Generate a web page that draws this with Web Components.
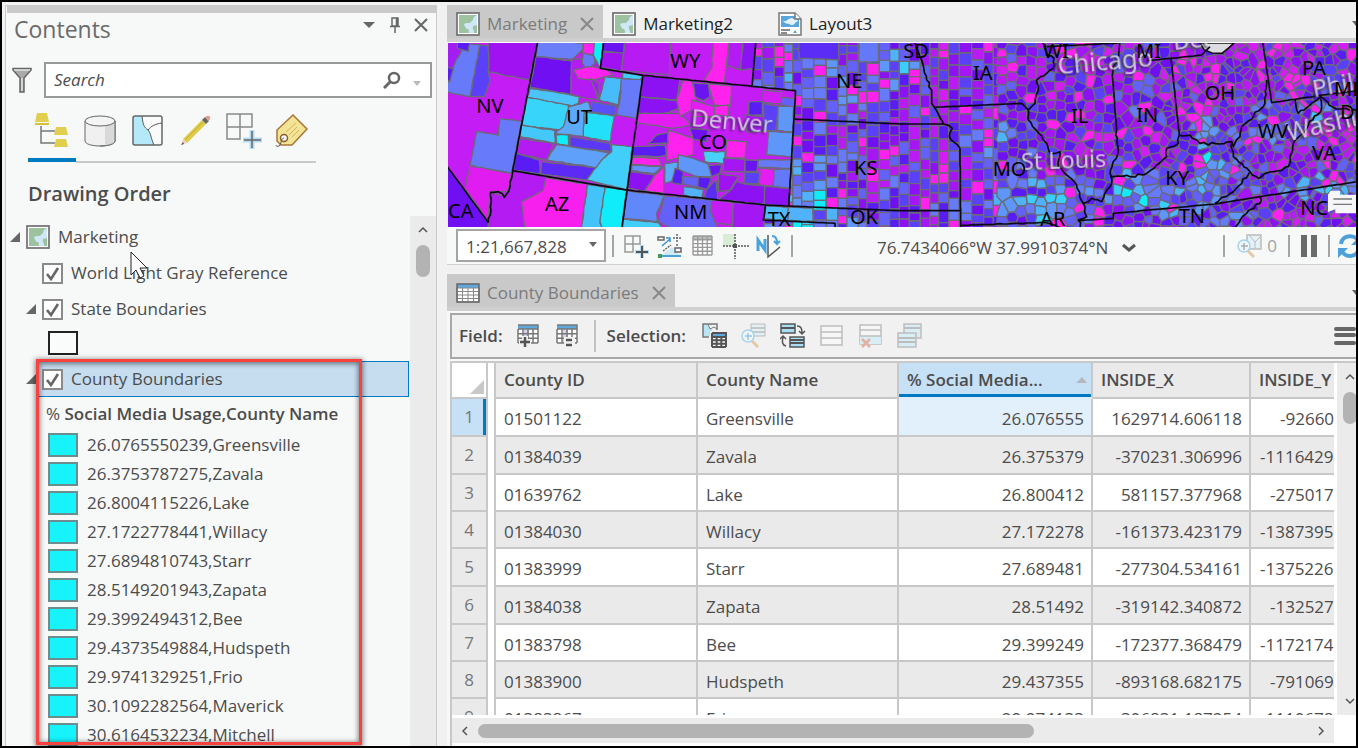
<!DOCTYPE html>
<html lang="en">
<head>
<meta charset="utf-8">
<title>Marketing - Contents</title>
<style>
html, body { margin: 0; height: 100%; }
body { font-family: "Open Sans", "Noto Sans", sans-serif; font-size: 17px; line-height: 24px; color: #4c4c4c; background: #f1f1f1; overflow: hidden; }
</style>
</head>
<body>
<gis-app></gis-app>
<script>
const BASE = `:host,*{box-sizing:border-box} button,select,input{font:inherit;color:inherit;margin:0;padding:0;border:0;background:none;border-radius:0} button{display:flex;align-items:center;justify-content:center}`;
const define = (name, css, html, setup) => customElements.define(name, class extends HTMLElement {
  constructor() {
    super();
    this.attachShadow({ mode: 'open' }).innerHTML = `<style>${BASE}${css}</style>${typeof html === 'function' ? html(this) : html}`;
    if (setup) setup(this, this.shadowRoot);
  }
});

/* ---------- icons ---------- */
const gridLines = (x, y, w, h, c, r) => { let d = ''; for (let i = 0; i <= c; i++) d += `M${x + w * i / c} ${y}v${h}`; for (let j = 0; j <= r; j++) d += `M${x} ${y + h * j / r}h${w}`; return d; };
const ICONS = {
  caret: [14, 8, '<path d="M1 1h12l-6 6z" fill="#666"/>'],
  caretS: [8, 5, '<path d="M0 0h8l-4 5z" fill="#666"/>'],
  caretLight: [8, 5, '<path d="M0 0h8l-4 5z" fill="#bbb"/>'],
  pin: [12, 16, '<path d="M3 1h6v8H3zM1 9.500h10M6 10v6M7.500 1v8" fill="none" stroke="#666" stroke-width="1.500"/>'],
  close: [14, 14, '<path d="M1 1l12 12M13 1L1 13" stroke="#666" stroke-width="2" fill="none"/>'],
  closeTab: [14, 14, '<path d="M1 1l12 12M13 1L1 13" stroke="#888" stroke-width="2" fill="none"/>'],
  filter: [20, 26, '<path d="M1 1.500h18v1.500l-7 8v14H8V11L1 3z" fill="#aaa" stroke="#666" stroke-width="1.500"/><path d="M2 3h16" stroke="#fff"/><path d="M10 11v13" stroke="#fff"/>'],
  search: [18, 18, '<circle cx="11" cy="7" r="5" fill="none" stroke="#666" stroke-width="2.500"/><path d="M7 11l-6 6" stroke="#666" stroke-width="3"/>'],
  order: [34, 34, '<path d="M6 13v17h14M6 18h14" fill="none" stroke="#777" stroke-width="1.500"/><path d="M2 0h10l2 9H0z M21 14h10l2 8H19z M21 26h10l2 8H19z" fill="#e2cf4f"/><path d="M0 10h14v2H0z" fill="#d8c338"/>'],
  source: [32, 32, '<path d="M1 6v20c0 3 7 5 15 5s15-2 15-5V6" fill="#f0f0f0" stroke="#666"/><path d="M21 10v21c6-1 10-2 10-5V7z" fill="#d9d9d9"/><ellipse cx="16" cy="6" rx="15" ry="5" fill="#f4f4f4" stroke="#666"/><path d="M31 6v20c0 3-7 5-15 5" fill="none" stroke="#666"/>'],
  select: [32, 32, '<rect x="1" y="1" width="29" height="29" rx="2" fill="#fafafa"/><path d="M1 1h9c1 9 2 11 6 14 3 3 3 9 6 15H1z" fill="#b5e8f8"/><path d="M10 1c1 9 2 11 6 14 3 3 3 9 6 15M16 15c3-4 7-6 14-7" fill="none" stroke="#555"/><rect x="1" y="1" width="29" height="29" rx="2" fill="none" stroke="#666" stroke-width="1.500"/>'],
  edit: [32, 32, '<path d="M3 24l19-19 4 4L7 28z" fill="#dfca4a"/><path d="M5 25l18-18" stroke="#c7b02f"/><path d="M3 24l4 4-6 2z" fill="#f1cfc0"/><path d="M1 30l2-3 1 2z" fill="#555"/><path d="M22 5l3-3 4 4-3 3z" fill="#666"/><path d="M25 2l2-1c2-1 4 1 3 3l-2 2z" fill="#e89a8c"/>'],
  snap: [36, 36, '<path d="M1 1h25v13H1zM1 1h13v25H1z" fill="none" stroke="#888" stroke-width="1.500"/><path d="M26 17v19M17 27h19" stroke="#b5dcf5" stroke-width="5"/><path d="M26 18v17M18 27h17" stroke="#666" stroke-width="1.500"/>'],
  label: [34, 34, '<path d="M18 1l14 14-15 16H6l-4-4V16z" fill="#f3e394" stroke="#a8773a" stroke-width="1.500"/><path d="M11 18l10-9M14 21l8-8M17 23l7-7" stroke="#d2b06a"/><circle cx="9" cy="24" r="3.500" fill="#fff" stroke="#8a5a28" stroke-width="1.500"/><path d="M9 24c-4 1-2 6-5 8-2 1-3 0-3-1" fill="none" stroke="#555"/>'],
  map: [24, 24, '<rect x="1" y="1" width="22" height="22" fill="#fff" stroke="#777" stroke-width="1.800"/><rect x="3" y="3" width="18" height="18" fill="#9dc29f"/><path d="M21 3c-3 1-4 3-4 5-2 1-2 3-4 3s-4 0-5 1c0 2 2 3 2 5 2-1 3 0 3 4h5c1-2 1-3 3-4z" fill="#cfe7f7"/><path d="M17 14l4-1v8h-3c1-2-2-4-1-7z" fill="#9dc29f"/>'],
  layout: [24, 24, '<path d="M1 1h16l6 6v16H1z" fill="#fff" stroke="#777" stroke-width="1.500"/><rect x="3" y="4" width="18" height="11" fill="#5aa5da"/><path d="M5 9c4 1 5-3 9-3 2 2 5 0 6 3-3 1-4 5-7 4-2-2-5 0-8-4z" fill="#e3f2fb"/><path d="M17 1v6h6" fill="#fff" stroke="#777" stroke-width="1.500"/><path d="M3 18h9M3 21h6" stroke="#666" stroke-width="1.500"/><path d="M15 21l2-3 2 3z" fill="#5aa5da"/>'],
  table: [24, 20, `<rect x="1" y="1" width="22" height="18" fill="#fff"/><path d="M1 1h22v4H1z" fill="#5fa9dd"/><path d="${gridLines(1, 5, 22, 14, 4, 4)}" stroke="#888" fill="none"/><rect x="1" y="1" width="22" height="18" fill="none" stroke="#666" stroke-width="1.500"/>`],
  navGrid: [26, 26, '<path d="M1 3h15v8H1zM1 3h8v16H1z" fill="none" stroke="#999" stroke-width="1.500"/><path d="M18 12v13M11 19h14" stroke="#b5dcf5" stroke-width="4"/><path d="M18 13v12M12 19h12" stroke="#555" stroke-width="2"/>'],
  navConstraint: [26, 26, '<path d="M3 23l12-9 9 9z" fill="#cfe9f7"/><path d="M4 23h20" stroke="#4aa0d8" stroke-width="2"/><path d="M1 21h4v4H1z" fill="#3f9a55"/><path d="M5 13l8-7M9 5h4v4" stroke="#3b93d0" stroke-width="1.500" fill="none"/><path d="M1 4h6v3H1zM18 15h6v4h-6z" fill="#fff" stroke="#666" stroke-width="1.500"/><path d="M16 5h8M20 1v8M6 18l8-6M20 11v3" stroke="#666" stroke-width="1.500" stroke-dasharray="2 1"/>'],
  navTable: [22, 22, `<rect x="1" y="1" width="19" height="19" fill="#fff"/><path d="M1 1h19v4H1z" fill="#bbb"/><path d="${gridLines(1, 1, 19, 19, 4, 5)}" stroke="#999" stroke-width="1.400" fill="none"/>`],
  navCross: [26, 26, '<path d="M0 1h12v12H0z" fill="#d8ecd6"/><path d="M12 1v25M0 13h26" stroke="#555" stroke-width="1.500" stroke-dasharray="2 1"/><rect x="10" y="11" width="4" height="4" fill="#555"/>'],
  navNorth: [26, 26, '<path d="M2 18V7l7 10V6" fill="none" stroke="#4aa3dc" stroke-width="3"/><path d="M12 2v22l12-10" fill="none" stroke="#555" stroke-width="1.500"/><path d="M16 3c4 0 5 3 5 7M18 8l3 3 3-3" fill="none" stroke="#4aa3dc" stroke-width="2"/>'],
  chevron: [16, 10, '<path d="M2 2l6 5 6-5" fill="none" stroke="#555" stroke-width="3"/>'],
  zoomSel: [26, 26, '<path d="M11 2h14v14H11z" fill="#e4f1f7" stroke="#bbb" stroke-width="1.500"/><path d="M14 3l5 6 5-5M19 9v6" fill="none" stroke="#bbb"/><circle cx="8" cy="13" r="6" fill="#eef7fc" stroke="#a8d2ec" stroke-width="1.500"/><path d="M8 10v7M5 13h7" stroke="#aaa" stroke-width="1.500"/><path d="M12 18l6 6" stroke="#e5c8a8" stroke-width="3"/>'],
  pause: [16, 22, '<path d="M0 0h6v22H0zM10 0h6v22h-6z" fill="#6a6a6a"/>'],
  refresh: [24, 24, '<path d="M3 10c1-10 15-10 18-2M21 14c-1 10-14 10-17 3" fill="none" stroke="#4da0da" stroke-width="4"/><path d="M23 1v10H13zM0 24V14h10z" fill="#4da0da"/>'],
  addField: [24, 26, `<path d="M1 2h20v18H1z" fill="#fff"/><path d="M7 7h5v13H7z" fill="#d4d2ee"/><path d="M1 2h20v4H1z" fill="#5fa9dd"/><path d="${gridLines(1, 6, 20, 14, 4, 3)}M1 2h20v4" stroke="#777" stroke-width="1.500" fill="none"/><path d="M8 13v12M2 19h12" stroke="#f1f1f1" stroke-width="6"/><path d="M8 14v10M3 19h10" stroke="#555" stroke-width="2.500"/>`],
  calcField: [24, 26, `<path d="M1 2h20v18H1z" fill="#fff"/><path d="M7 7h5v13H7z" fill="#d4d2ee"/><path d="M1 2h20v4H1z" fill="#5fa9dd"/><path d="${gridLines(1, 6, 20, 14, 4, 3)}M1 2h20v4" stroke="#777" stroke-width="1.500" fill="none"/><path d="M8 14h11v10H8z" fill="#f1f1f1"/><path d="M10 17h6M10 22h6" stroke="#555" stroke-width="2.500"/>`],
  selAttr: [26, 26, `<path d="M1 1h9v12H1z" fill="#b9e6f5"/><path d="M6 1l2 5 4-2 3 2" fill="#fff" stroke="#777"/><path d="M7 14H1V1h14v6" fill="none" stroke="#777" stroke-width="1.500"/><path d="M8 8h17v17H8z" fill="#f1f1f1"/><path d="M10 10h14v14H10z" fill="#fff"/><path d="M10 10h14v4H10z" fill="#5fa9dd"/><path d="${gridLines(10, 14, 14, 10, 3, 3)}M10 10h14v4M10 10v4" stroke="#555" stroke-width="2" fill="none"/>`],
  zoomRow: [26, 26, '<path d="M10 1h14v12H10z" fill="#e2f0f5" stroke="#bbb"/><path d="M10 5h14M10 9h14" stroke="#bbb" stroke-width="1.500"/><circle cx="7" cy="13" r="6" fill="#eef7fc" stroke="#a8d2ec" stroke-width="1.500"/><path d="M7 10v7M4 13h7" stroke="#9ac3dd" stroke-width="1.500"/><path d="M11 18l6 6" stroke="#e5c8a8" stroke-width="3"/>'],
  switchSel: [26, 26, '<path d="M1 1h14v9H1zM10 14h14v10H10z" fill="#a9def2" stroke="#555" stroke-width="1.500"/><path d="M1 5h14M10 17h14M10 20h14" stroke="#555" stroke-width="2"/><path d="M17 3c5 0 5 4 5 8M19 8l3 3 3-3M6 23c-4-1-4-4-3-9M0 16l3-3 3 3" fill="none" stroke="#555" stroke-width="1.500"/>'],
  clearSel: [24, 22, '<path d="M1 1h21v19H1zM1 7h21M1 13h21" fill="#f6f6f6" stroke="#bdbdbd" stroke-width="1.500"/>'],
  deleteSel: [26, 26, '<path d="M2 2h21v19H2z" fill="#f6f6f6" stroke="#bdbdbd" stroke-width="1.500"/><path d="M2 13h21v8H2z" fill="#d8edf4"/><path d="M2 7h21M2 13h21" stroke="#bdbdbd" stroke-width="1.500"/><path d="M4 16l8 8M12 16l-8 8" stroke="#e5b0a0" stroke-width="2.500"/>'],
  copySel: [26, 26, '<path d="M7 1h17v14H7z" fill="#d8edf4" stroke="#bdbdbd" stroke-width="1.500"/><path d="M7 5h17" stroke="#bdbdbd" stroke-width="2"/><path d="M1 10h18v14H1z" fill="#d8edf4" stroke="#bdbdbd" stroke-width="1.500"/><path d="M1 15h18M1 19h18" stroke="#bdbdbd" stroke-width="2"/>'],
  menu: [22, 20, '<path d="M2 3h18M2 9h18M2 17h18" stroke="#666" stroke-width="4" stroke-linecap="round"/>'],
  expand: [12, 12, '<path d="M11 1v10H1z" fill="#666"/>'],
  up: [10, 7, '<path d="M1 6l4-4 4 4" fill="none" stroke="#555" stroke-width="1.500"/>'],
  down: [10, 7, '<path d="M1 1l4 4 4-4" fill="none" stroke="#555" stroke-width="1.500"/>'],
  left: [7, 10, '<path d="M6 1L2 5l4 4" fill="none" stroke="#555" stroke-width="1.500"/>'],
  right: [7, 10, '<path d="M1 1l4 4-4 4" fill="none" stroke="#555" stroke-width="1.500"/>'],
  corner: [16, 16, '<path d="M15 1v14H1z" fill="#c8c8c8"/>'],
  sort: [11, 6, '<path d="M0 6h11L6 0z" fill="#b5b9bd"/>'],
  cursor: [20, 30, '<path d="M1 1v23l5-5 4 8 4-2-4-8h7z" fill="#fff" stroke="#222"/>']
};
customElements.define('ui-icon', class extends HTMLElement {
  static observedAttributes = ['name'];
  constructor() { super(); this.attachShadow({ mode: 'open' }); }
  attributeChangedCallback(a, b, name) {
    const [w, h, body] = ICONS[name];
    this.shadowRoot.innerHTML = `<style>:host{display:block;flex:none;width:${w}px;height:${h}px}svg{display:block}</style><svg width="${w}" height="${h}" viewBox="0 0 ${w} ${h}" aria-hidden="true">${body}</svg>`;
  }
});

/* ---------- document tabs ---------- */
define('doc-tab', `
:host{display:block;flex:none}
button{height:33px;padding:4px 9px 0;gap:7px;white-space:nowrap;color:#222;justify-content:flex-start}
:host([active]) button{background:#c9c9c9;color:#7b7b7b}
.t{min-width:80px;text-align:left}
ui-icon[name=closeTab]{margin-left:6px}`,
  el => `<button type="button"><ui-icon name="${el.getAttribute('icon')}"></ui-icon><span class="t"><slot></slot></span>${el.hasAttribute('active') ? '<ui-icon name="closeTab"></ui-icon>' : ''}</button>`);

define('tab-strip', `
:host{display:flex;align-items:flex-end;height:37px;flex:none;border-bottom:4px solid #cfcfcf;overflow:hidden}
.more{margin-left:auto;height:30px;flex:none;width:4px;overflow:hidden;justify-content:flex-start}`,
  `<slot></slot><button class="more" type="button" aria-label="Tab list"><ui-icon name="caretS"></ui-icon></button>`);

/* ---------- contents pane ---------- */
define('layer-row', `
:host{display:flex;align-items:center;height:36px;margin-right:1px;white-space:nowrap}
.e{width:12px;margin:0 1px 0 19px;flex:none}
:host([root]) .e{margin:0 1px 0 3px}
.b{display:flex;align-items:center;gap:8px;flex:1;height:36px;padding-left:3px;border:1px solid transparent}
:host([selected]) .b{background:#c6dcef;border-color:#0079c1}
label{display:flex;align-items:center;gap:8px}
input{appearance:none;flex:none;width:21px;height:21px;border:2px solid #8a8a8a;background:#fff url('data:image/svg+xml,<svg xmlns="http://www.w3.org/2000/svg" viewBox="0 0 17 17"><path d="M3 9l4 5 7-11" fill="none" stroke="%23666" stroke-width="2.600"/></svg>') center/17px no-repeat}`,
  el => `<span class="e">${el.hasAttribute('leaf') ? '' : '<ui-icon name="expand"></ui-icon>'}</span><div class="b">${el.hasAttribute('root') ? '<ui-icon name="map"></ui-icon><slot></slot>' : '<label><input type="checkbox" checked><span><slot></slot></span></label>'}</div>`);

define('legend-item', `
:host{display:flex;align-items:center;gap:9px;height:29px;padding-left:42px;white-space:nowrap}
i{width:30px;height:24px;border:2px solid #6d8c8e;background:#16f3fb}
:host([hollow]){height:34px;padding-bottom:2px}
:host([hollow]) i{border-color:#222;background:#fafcfb}`, `<i></i><slot></slot>`);

define('scroll-bar', `
:host{display:flex;flex-direction:column;align-items:center;justify-content:space-between;background:#ebebeb;flex:none;overflow:hidden}
:host([horizontal]){flex-direction:row}
i{background:#b3b3b3;border-radius:8px;flex:none;width:14px;height:32px;margin:12px 0 auto}
:host([horizontal]) i{width:63%;height:14px;margin:0 auto 0 1px}
button{padding:10px 0 0;width:13px}
button:last-child{padding:0 0 10px}
:host([horizontal]) button{padding:0;width:25px;height:25px}`,
  el => { const h = el.hasAttribute('horizontal'); return `<button type="button" aria-label="Scroll back"><ui-icon name="${h ? 'left' : 'up'}"></ui-icon></button><i></i>${el.hasAttribute('open') ? '' : `<button type="button" aria-label="Scroll forward"><ui-icon name="${h ? 'right' : 'down'}"></ui-icon></button>`}`; });

const LEGEND = ['26.0765550239,Greensville', '26.3753787275,Zavala', '26.8004115226,Lake', '27.1722778441,Willacy', '27.6894810743,Starr', '28.5149201943,Zapata', '29.3992494312,Bee', '29.4373549884,Hudspeth', '29.9741329251,Frio', '30.1092282564,Maverick', '30.6164532234,Mitchell'];

define('contents-pane', `
:host{display:flex;flex-direction:column;margin:3px 0 0 3px;border:1px solid #cacaca;border-bottom:0;background:#f7f9f8;min-height:0;overflow:hidden}
.bar{height:7px;margin-left:1px;background:#cacaca;flex:none}
header{display:flex;align-items:flex-start;height:34px;flex:none;padding:0 8px;color:#6a6a6a}
h1{margin:0 auto 0 0;font-weight:400;font-size:23px;line-height:32px}
header button{margin-left:13px;height:24px}
.search{display:flex;align-items:center;gap:12px;flex:none;margin:15px 4px 0 6px;height:36px}
.box{display:flex;align-items:center;flex:1;height:36px;border:2px solid #999;background:#fff;padding:0 9px 0 8px}
.box input{flex:1;min-width:0;font-style:italic;outline:0}
.box input::placeholder{color:#4c4c4c;opacity:1}
.box button+button{margin:6px 0 0 12px}
nav{display:flex;height:59px;flex:none;margin:6px 0 0 22px}
nav button{width:48px;height:59px;padding-bottom:4px;border-bottom:2px solid #cacaca}
nav button.on{height:58px;padding-bottom:2px;border-bottom:4px solid #0079c1}
h2{margin:16px 0 0 22px;font-weight:600;font-size:20px;line-height:30px;flex:none}
.tree{position:relative;display:flex;flex:1;min-height:0;margin-top:7px}
.list{flex:1;min-width:0;overflow:hidden;padding-top:3px}
h3{margin:0;padding-left:40px;font-weight:600;font-size:17px;line-height:33px;white-space:nowrap}
h3 span{font-weight:400}
.mark{position:absolute;left:30px;top:143px;right:74px;bottom:1px;border:3px solid #f8423f;box-shadow:0 1px 5px 1px #0007,inset 0 1px 5px 1px #0007;pointer-events:none}
.cursor{position:absolute;left:124px;top:35px;pointer-events:none}
scroll-bar{width:26px}`,
  `<div class="bar"></div>
<header><h1>Contents</h1><button type="button" aria-label="Options"><ui-icon name="caret"></ui-icon></button><button type="button" aria-label="Auto hide"><ui-icon name="pin"></ui-icon></button><button type="button" aria-label="Close"><ui-icon name="close"></ui-icon></button></header>
<div class="search"><button type="button" aria-label="Filter"><ui-icon name="filter"></ui-icon></button>
<div class="box"><input type="text" placeholder="Search" aria-label="Search"><button type="button" aria-label="Run search"><ui-icon name="search"></ui-icon></button><button type="button" aria-label="Search options"><ui-icon name="caretLight"></ui-icon></button></div></div>
<nav>${['order', 'source', 'select', 'edit', 'snap', 'label'].map((n, i) => `<button type="button" aria-label="List by ${n}"${i ? '' : ' class="on"'}><ui-icon name="${n}"></ui-icon></button>`).join('')}</nav>
<h2>Drawing Order</h2>
<div class="tree"><div class="list">
<layer-row root>Marketing</layer-row>
<layer-row leaf>World Light Gray Reference</layer-row>
<layer-row>State Boundaries</layer-row>
<legend-item hollow></legend-item>
<layer-row selected>County Boundaries</layer-row>
<h3><span>%</span> Social Media Usage,County Name</h3>
${LEGEND.map(t => `<legend-item>${t}</legend-item>`).join('')}
</div><scroll-bar open></scroll-bar><div class="mark"></div><ui-icon class="cursor" name="cursor"></ui-icon></div>`);

/* ---------- map ---------- */
let seed = 7;
const rnd = () => (seed = (seed * 16807) % 2147483647) / 2147483647;
const RAMP = ['#ff22ee', '#d41cf4', '#ba1af4', '#a416f4', '#8c12f4', '#7010f2', '#5a1cf4', '#5a40f8', '#6460fa', '#667afa', '#5e96fa', '#4fb2fa', '#3ccdfa', '#10ecfa'];
/* centres that push nearby counties to the warm (negative) or cool end of the ramp: x, y, radius x, radius y, weight */
const TREND = [[2400, 240, 200, 110, .25], [2640, 200, 100, 120, .12], [2420, 540, 90, 100, .42], [2400, 660, 140, 40, .45], [2640, 560, 200, 120, .08], [2710, 190, 50, 70, .25], [2990, 400, 120, 90, .24], [3120, 610, 130, 80, .42], [2920, 630, 80, 90, .22], [3240, 330, 120, 130, -.06], [3400, 300, 60, 120, .12], [3400, 570, 120, 60, .34], [3520, 600, 150, 60, .3], [3640, 500, 60, 70, .5], [3620, 395, 80, 35, .32], [3700, 660, 60, 40, .25], [3470, 450, 60, 40, -.05], [3810, 370, 80, 60, .3], [3960, 560, 150, 45, .42], [3950, 320, 40, 50, .4], [3560, 200, 90, 60, -.08], [3880, 170, 100, 90, -.08], [4040, 420, 60, 50, -.2]];
const tint = (x, y) => {
  let t = .1 + rnd() * .5;
  for (const [cx, cy, rx, ry, w] of TREND) t += w * Math.exp(-(((x - cx) / rx) ** 2 + ((y - cy) / ry) ** 2));
  if (rnd() < .1) t = 0;
  return RAMP[Math.max(0, Math.min(13, Math.floor(t * 14)))];
};
/* the plains: survey-line counties, close to rectangular */
function plains() {
  let out = '';
  for (let x = 2230; x < 3010;) {
    const w = 26 + Math.round(rnd() * 12);
    for (let y = 100 + Math.round(rnd() * 25); y < 700;) {
      const h = 22 + Math.round(rnd() * 18), wide = rnd() < .1 ? 24 : 0;
      out += `<path fill="${tint(x, y)}" d="M${x} ${y}h${w + wide}v${h}h-${w + wide}z"/>`;
      y += h;
    }
    x += w;
  }
  return out;
}
function clipCell(poly, a, b) {
  const mx = (a[0] + b[0]) / 2, my = (a[1] + b[1]) / 2, nx = b[0] - a[0], ny = b[1] - a[1], out = [];
  const side = p => (p[0] - mx) * nx + (p[1] - my) * ny;
  poly.forEach((p, i) => {
    const q = poly[(i + 1) % poly.length], sp = side(p), sq = side(q);
    if (sp <= 0) out.push(p);
    if (sp * sq < 0) { const k = sp / (sp - sq); out.push([p[0] + (q[0] - p[0]) * k, p[1] + (q[1] - p[1]) * k]); }
  });
  return out;
}
/* further east: irregular cells around scattered seats */
function counties() {
  const xs = []; let x = 2950;
  while (x < 4120) { xs.push(x); x += x < 3500 ? 29 : 24; }
  const sites = xs.map(cx => {
    const step = cx < 3500 ? 28 : 24, j = cx < 3200 ? .35 : cx < 3420 ? .45 : .95, col = [];
    const off = cx < 3480 ? rnd() * 14 : 0;
    for (let y = 90; y < 730; y += step) if (rnd() > .09) col.push([cx + (rnd() - .5) * step * j, y + off + (rnd() - .5) * step * j]);
    return col;
  });
  let out = '';
  sites.forEach((col, i) => i > 1 && col.forEach(s => {
    let p = [[s[0] - 60, s[1] - 60], [s[0] + 60, s[1] - 60], [s[0] + 60, s[1] + 60], [s[0] - 60, s[1] + 60]];
    for (let k = Math.max(0, i - 4); k <= Math.min(sites.length - 1, i + 4); k++)
      for (const n of sites[k]) if (n !== s && Math.abs(n[1] - s[1]) < 100) p = clipCell(p, s, n);
    out += `<path fill="${tint(s[0], s[1])}" d="M${p.map(v => v.map(Math.round).join(' ')).join('L')}z"/>`;
  }));
  return out;
}
/* str: list of x,y pairs; amp adds a river-like wobble between them */
const rough = (str, amp = 7) => {
  const pts = str.split(' ').map(s => s.split(',').map(Number)); let d = 'M' + pts[0];
  for (let i = 1; i < pts.length; i++) {
    const [ax, ay] = pts[i - 1], [bx, by] = pts[i], n = Math.max(1, Math.round(Math.hypot(bx - ax, by - ay) / 12));
    for (let k = 1; k < n; k++) d += `L${Math.round(ax + (bx - ax) * k / n + (rnd() - .5) * amp * 2)} ${Math.round(ay + (by - ay) * k / n + (rnd() - .5) * amp * 2)}`;
    d += `L${bx} ${by}`;
  }
  return d;
};
const WEST = `
#c41cf4 0,120 933,120 921,260 1052,272 1031,620 962,615 955,690 0,690
#a41cf4 0,120 40,120 60,165 10,270 0,270
#667afa 60,129 105,135 75,290 0,275 25,200
#5a40f8 105,135 135,140 130,215 135,240 118,290 75,290
#5a1cf4 37,120 75,120 70,154 37,145
#5a1cf4 0,200 25,207 15,243 0,243
#a012f2 130,120 279,120 253,240 130,215
#667afa 165,355 230,365 200,520 75,497 95,395 160,405
#e01cf0 75,497 200,520 190,575 135,575 130,665 60,565
#7010f2 0,490 130,665 130,690 0,690
#b41af2 203,512 545,570 530,690 130,690 135,575 180,590 190,575
#f71fee 303,533 428,553 408,690 240,690 230,605 295,570
#44c2fa 428,553 480,562 465,670 475,690 408,690
#10ecfa 480,562 545,570 530,690 475,690 465,665
#6a7efa 279,120 415,129 412,150 382,178 273,170
#7010f2 273,170 380,183 378,283 255,262
#b41af2 380,178 440,175 460,190 480,210 470,230 440,240 460,300 400,290 378,283
#667afa 415,160 445,165 450,190 425,210 412,190
#ff22ee 430,200 480,205 505,225 440,240 400,235 385,210
#ff22ee 415,129 450,129 445,165 412,158
#10ecfa 450,120 477,120 466,205 445,165
#48bcfa 480,230 530,235 520,315 463,300
#3ccdfa 533,218 594,226 585,240 533,235
#667afa 530,235 592,240 573,355 515,345 525,300
#a41cf4 437,235 462,300 463,250
#4ac4fa 255,265 370,283 402,290 400,310 380,318 247,292
#38d4fa 247,292 370,315 372,345 355,392 230,375
#5eaafa 372,320 430,305 440,340 418,345 415,410 330,400 355,380
#5a50fa 440,305 515,318 508,348 435,335
#24dffa 418,335 508,348 495,425 415,410
#44c8fa 230,375 330,392 330,430 225,410
#10ecfa 333,405 370,405 370,437 335,430
#5a38f6 375,410 495,430 500,455 375,440
#b41af2 225,415 325,430 305,480 213,460
#5ea0fa 335,433 490,458 455,503 305,480
#5a1cf4 213,460 283,480 285,522 205,510
#5c2af4 290,485 455,503 425,540 287,522
#42cefa 500,433 562,440 545,570 425,540 470,480 500,455
#6a14f2 475,120 540,120 535,160 473,153
#a012f2 473,155 535,160 530,212 467,203
#b81af4 540,120 678,120 672,225 530,212
#ff22ee 805,120 852,120 838,252 775,243 800,205
#b41af4 852,120 895,120 887,210 847,195
#8c12f4 895,120 933,120 926,205 887,210
#8c12f4 594,226 705,238 695,300 585,290
#8c12f4 585,290 700,303 715,320 640,348 578,340
#e41ef2 578,340 705,340 740,375 680,385 573,367
#ff22ee 715,240 740,243 755,290 740,330 705,350 695,300
#6a14f2 745,248 790,252 795,290 775,302 750,290
#ff22ee 790,252 860,258 855,320 808,315
#ff22ee 805,320 850,315 850,350 805,345
#e41ef2 740,300 808,320 808,350 740,350
#5a1cf4 912,305 952,305 952,345 910,345
#5a40f8 955,310 1000,318 993,390 955,395
#5e96fa 1000,318 1046,320 1043,395 997,392
#6460fa 1010,292 1050,295 1048,320 1010,315
#5e96fa 970,395 1043,398 1040,470 965,465
#d41cf4 955,270 1010,275 1008,312 955,308
#a416f4 900,345 955,350 955,395 905,395
#7010f2 635,405 680,395 670,430 610,430
#5a1cf4 565,440 660,435 665,465 640,470 560,468
#ff22ee 562,472 640,475 650,500 560,492
#ff22ee 670,390 700,400 745,415 745,465 665,482
#6490fa 560,495 650,500 630,520 560,512
#8c12f4 555,515 630,525 600,572 548,565
#ff22ee 630,525 658,500 655,580 600,573
#5eaafa 660,490 700,487 690,540 660,550
#5e96fa 700,465 745,475 790,492 800,530 760,530 700,510
#46d0fa 775,455 840,455 838,492 780,485
#7010f2 735,385 790,390 785,425 745,418
#5a1cf4 690,505 715,515 710,555 680,548
#6460fa 712,530 760,530 757,562 712,550
#5a1cf4 762,530 800,535 785,568 757,560
#4fb2fa 715,560 775,568 770,595 715,585
#6a14f2 790,495 830,495 825,520 800,530
#5a2cf4 785,568 812,540 818,600 778,595
#a012f2 820,520 880,530 855,570 820,575
#ff22ee 845,420 905,425 900,475 842,472
#a416f4 835,475 900,478 900,515 835,515
#6a14f2 900,480 940,480 935,515 900,515
#e41ef2 945,505 988,508 985,558 942,555
#5a40f8 900,515 945,520 940,552 897,550
#667afa 940,478 1040,480 1038,505 940,502
#6478fa 988,508 1038,508 1034,565 985,560
#8c12f4 820,600 855,572 875,545 897,552 960,558 958,613
#8c12f4 960,558 1034,566 1031,620 958,613
#6088fa 545,572 658,587 635,640 637,665 533,655
#6460fa 658,587 800,600 795,635 815,660 812,690 690,690 640,665
#42cefa 533,658 640,668 655,690 530,690
#c41cf4 800,600 865,607 862,675 812,670 797,635
#a416f4 865,607 962,615 955,690 862,690
#5a2cf6 1062,120 1182,120 1182,180 1062,175
#6478fa 1242,120 1300,120 1300,186 1242,186
#4fbafa 962,617 1030,622 1028,662 958,657
#4fb2fa 1030,622 1104,625 1104,664 1028,662`;
const LINES = [['0,490 130,668', 0], ['203,512 192,572 178,592 160,575 137,577 138,610 130,668', 3], ['279,120 203,512 545,570', 0], ['477,120 466,205 594,226 1052,272', 0], ['594,226 530,690', 0], ['933,120 921,260', 0], ['1052,272 1031,620', 0], ['1046,357 1365,372 1495,372', 0], ['545,570 962,615 1365,632 1545,632', 0], ['962,615 955,660 1170,670 1170,690', 0]];
const ELINES = [['42,120 50,150 65,180 80,240 95,270 95,310 103,322 130,372 157,385 148,410 180,445', 3], ['180,445 182,690', 0], ['103,322 365,310 385,330', 0], ['425,120 440,165 462,175 460,205 410,240 415,270 405,310 385,330 385,360 440,430 450,460 480,455 475,500 530,555 550,610', 3], ['440,140 655,129', 0], ['660,120 655,175 640,200 637,225 650,390', 0], ['650,390 655,450 630,520 635,550 605,605 575,595 550,610 560,650 535,660 545,690', 4], ['630,530 690,530 740,520 770,495 800,470 800,445 835,430 838,405 870,405 900,430 960,432 995,425 1000,440 1020,410 1025,380 1060,350 1095,310 1100,240', 4], ['813,175 838,405', 0], ['740,182 813,175 905,165 930,140', 0], ['1087,120 1115,308 1290,282 1370,272', 0], ['1185,298 1195,340 1230,315 1262,290 1300,322 1370,330', 4], ['1262,295 1262,335 1225,375 1210,400 1180,430 1165,500 1120,515 1075,535 1050,515 1000,470 995,425', 4], ['1050,515 1000,575 945,610', 4], ['535,662 640,655 640,640 945,612 1080,590 1370,545', 0], ['1080,590 1080,610 1040,640 1000,690', 5], ['182,676 440,668 500,690', 1]];
const STATES = [['NV', 1429, 338], ['UT', 1699, 372], ['WY', 2011, 203], ['CO', 2097, 446], ['AZ', 1635, 633], ['NM', 2022, 657], ['CA', 1344, 654], ['TX', 2303, 678], ['NE', 2508, 265], ['KS', 2562, 525], ['OK', 2550, 673], ['SD', 2710, 175], ['IA', 2919, 241], ['WI', 3130, 175], ['IL', 3213, 368], ['IN', 3409, 365], ['MI', 3408, 175], ['OH', 3614, 299], ['PA', 3906, 226], ['MO', 2978, 529], ['AR', 3121, 678], ['KY', 3496, 556], ['TN', 3536, 669], ['WV', 3773, 414], ['VA', 3936, 481], ['NC', 3901, 645], ['MD', 4002, 289], ['DC', 4020, 357]];
const CITIES = [['Denver', 2072, 378, 5, 72], ['Chicago', 3175, 223, -5, 76], ['St Louis', 3064, 510, -2, 70], ['Det', 3522, 150, -6, 68], ['Phil', 3942, 292, -10, 72], ['Washin', 3866, 424, -13, 76]];

define('county-map', `
:host{display:block;flex:none;height:185px;margin-left:1px;border-top:1px solid #fff;overflow:hidden}
svg{display:block;width:100%;height:184px}
.s{font:60px "Noto Sans",sans-serif;fill:#000}
.c{font-family:"Noto Sans",sans-serif;fill:#dcdce4;opacity:.85;filter:drop-shadow(-6px 4px 3px #302a48)}`,
  () => `<svg viewBox="1344 129 2724 552" preserveAspectRatio="xMinYMin slice" role="img" aria-label="County map of social media usage">
<g stroke="#6b6b78" stroke-width="4" stroke-linejoin="round">${plains()}${counties()}<g transform="translate(1335)">${WEST.trim().split('\n').map(l => { const [c, ...p] = l.split(' '); return `<path fill="${c}" d="${rough(p.join(' ') + ' ' + p[0], 1)}z"/>`; }).join('')}</g></g>
<path d="M3600 129l12 20 24 10 30 1 22-18 14-13z" fill="#dcdbe0" stroke="#111" stroke-width="5"/>
<g fill="none" stroke="#0a0a14" stroke-width="5" stroke-linejoin="round"><g transform="translate(1335)">${LINES.map(l => `<path d="${rough(...l)}"/>`).join('')}</g><g transform="translate(2700)">${ELINES.map(l => `<path d="${rough(...l)}"/>`).join('')}</g></g>
<g>${CITIES.map(([t, x, y, r, s]) => `<text class="c" font-size="${s}" transform="translate(${x} ${y}) rotate(${r})">${t}</text>`).join('')}</g>
<g>${STATES.map(([t, x, y]) => `<text class="s" x="${x}" y="${y}">${t}</text>`).join('')}</g>
<path d="M3984 636v-52l8-12h28v12h60v56h-74v-12z" fill="#f6f6f8"/><path d="M4000 597h56M4000 613h56" stroke="#777" stroke-width="4"/></svg>`);

define('map-status', `
:host{display:flex;align-items:center;justify-content:space-between;height:38px;flex:none;padding-left:9px;background:#f7f9f8;border-bottom:1px solid #cfcfcf;overflow:hidden;white-space:nowrap}
div{display:flex;align-items:center}
.scale{position:relative;width:150px;height:33px;border:2px solid #a5a5a5;background:#fff}
select{appearance:none;width:100%;height:29px;padding:2px 0 0 8px;background:transparent}
.scale ui-icon{position:absolute;right:7px;top:11px;pointer-events:none}
hr{width:2px;height:22px;margin:0 6px;border:0;background:#a5a5a5}
.tools button{width:33px}
.xy{gap:13px;padding-top:4px}
.right hr{margin:0 8px}
.right button{color:#a2a2a2;gap:5px;margin:0 3px}
.right .cut{width:18px;margin:0;overflow:hidden;justify-content:flex-start}`,
  `<div class="tools"><label class="scale"><select aria-label="Map scale"><option>1:21,667,828</option></select><ui-icon name="caretS"></ui-icon></label><hr>
${['navGrid', 'navConstraint', 'navTable', 'navCross', 'navNorth'].map(n => `<button type="button" aria-label="${n}"><ui-icon name="${n}"></ui-icon></button>`).join('')}<hr></div>
<div class="xy"><span>76.7434066°W 37.9910374°N</span><button type="button" aria-label="Coordinate format"><ui-icon name="chevron"></ui-icon></button></div>
<div class="right"><hr><button type="button"><ui-icon name="zoomSel"></ui-icon>0</button><hr><button type="button" aria-label="Pause drawing"><ui-icon name="pause"></ui-icon></button><hr><button type="button" class="cut" aria-label="Refresh"><ui-icon name="refresh"></ui-icon></button></div>`);

/* ---------- attribute table ---------- */
define('table-toolbar', `
:host{display:flex;align-items:center;height:46px;flex:none;margin:2px 0 2px 3px;padding-left:7px;border:2px solid #a8a8a8;border-right:0;background:#f1f1f1;overflow:hidden;white-space:nowrap}
b{font-weight:600;margin-right:7px}
button{width:39px;height:32px}
hr{width:2px;height:32px;margin:0 11px 0 6px;border:0;background:#c2c2c2}
hr+b{margin-right:9px}
.m{width:22px;margin:0 0 0 auto}`,
  `<b>Field:</b><button type="button" aria-label="Add field"><ui-icon name="addField"></ui-icon></button><button type="button" aria-label="Calculate field"><ui-icon name="calcField"></ui-icon></button><hr><b>Selection:</b>${['selAttr', 'zoomRow', 'switchSel', 'clearSel', 'deleteSel', 'copySel'].map(n => `<button type="button" aria-label="${n}"><ui-icon name="${n}"></ui-icon></button>`).join('')}<button type="button" class="m" aria-label="Menu"><ui-icon name="menu"></ui-icon></button>`);

const ROWS = [['01501122', 'Greensville', '26.076555', '1629714.606118', '-92660.271184'], ['01384039', 'Zavala', '26.375379', '-370231.306996', '-1116429.68114'], ['01639762', 'Lake', '26.800412', '581157.377968', '-275017.731195'], ['01384030', 'Willacy', '27.172278', '-161373.423179', '-1387395.11742'], ['01383999', 'Starr', '27.689481', '-277304.534161', '-1375226.90517'], ['01384038', 'Zapata', '28.51492', '-319142.340872', '-132527.440182'], ['01383798', 'Bee', '29.399249', '-172377.368479', '-1172174.20117'], ['01383900', 'Hudspeth', '29.437355', '-893168.682175', '-791069.447310'], ['01383867', 'Frio', '29.974133', '-306831.187254', '-1110678.31905']];

define('attribute-table', `
:host{display:grid;grid-template:minmax(0,1fr) 25px / minmax(0,1fr) 19px;gap:3px;flex:1;min-height:0;margin-left:3px;padding-bottom:3px;border:solid #c8c8c8;border-width:2px 0 0 2px;background:#fff}
.view{overflow:hidden}
table{border-spacing:0;table-layout:fixed;width:1010px}
th,td{height:38px;padding:4px 8px 0;border:solid #c8c8c8;border-width:0 2px 2px 0;text-align:left;font-weight:400;line-height:20px;overflow:hidden;white-space:nowrap}
tbody tr:nth-child(4n+3)>*,tbody tr:nth-child(4n)>*{height:37px}
tbody tr:nth-child(even)>*,thead th{background:#eaeaea}
tbody tr>.gap.gap,thead .gap{background:#fff;border-bottom:0;padding:0}
thead :is(th,td){height:36px}
thead th{padding:0 8px;font-weight:600}
thead .corner{background:#fff;padding:13px 0 0 17px}
tbody th{background:#eaeaea;color:#777;padding:0;text-align:center}
tbody tr:first-child th{background:#c6e0f5;box-shadow:inset -3px 0 #0079c1}
.n{text-align:right}
td.n{padding-right:7px}
thead .sort{background:#c6e0f5;box-shadow:inset 0 -3px #0079c1;border-bottom-color:#e0effb}
.sort div{display:flex;align-items:center;justify-content:space-between;margin-right:-4px}
tbody tr:first-child td:nth-child(5){background:#e2f0fb}
scroll-bar:not([horizontal]){grid-column:2;padding-left:6px}`,
  `<div class="view"><table><colgroup><col style="width:36px"><col style="width:8px"><col style="width:202px"><col style="width:201px"><col style="width:194px"><col style="width:158px"><col></colgroup>
<thead><tr><th class="corner"><ui-icon name="corner"></ui-icon></th><td class="gap"></td><th>County ID</th><th>County Name</th><th class="sort"><div>% Social Media...<ui-icon name="sort"></ui-icon></div></th><th>INSIDE_X</th><th>INSIDE_Y</th></tr></thead>
<tbody>${ROWS.map((r, i) => `<tr><th scope="row">${i + 1}</th><td class="gap"></td>${r.map((c, k) => `<td${k > 1 && k < 4 ? ' class="n"' : k === 4 ? ' class="y"' : ''}>${c}</td>`).join('')}</tr>`).join('')}</tbody></table></div>
<scroll-bar></scroll-bar><scroll-bar horizontal></scroll-bar>`,
  (el, root) => {
    /* the decimal points of the last column line up: indent by the missing leading digits */
    root.querySelectorAll('.y').forEach(td => { td.style.paddingLeft = { 6: '29px', 7: '19px', 8: '9px' }[td.textContent.indexOf('.')] || '9px'; });
  });

/* ---------- window ---------- */
define('gis-app', `
:host{display:grid;grid-template-columns:minmax(300px,435px) minmax(0,1fr);grid-template-rows:minmax(0,1fr);column-gap:10px;height:100vh;border:2px solid #000;background:#f1f1f1;overflow:hidden}
main{display:flex;flex-direction:column;min-width:0;min-height:0}
.map,.data{display:flex;flex-direction:column}
.map{padding-top:3px;flex:none}
.data{flex:1;min-height:0;margin-top:9px;background:#f7f9f8}
.data tab-strip{background:#f1f1f1}
.last{margin-left:27px}`,
  `<contents-pane></contents-pane><main><section class="map"><tab-strip><doc-tab icon="map" active>Marketing</doc-tab><doc-tab icon="map">Marketing2</doc-tab><doc-tab icon="layout" class="last">Layout3</doc-tab></tab-strip><county-map></county-map><map-status></map-status></section>
<section class="data"><tab-strip><doc-tab icon="table" active>County Boundaries</doc-tab></tab-strip><table-toolbar></table-toolbar><attribute-table></attribute-table></section></main>`);
</script>
</body>
</html>
